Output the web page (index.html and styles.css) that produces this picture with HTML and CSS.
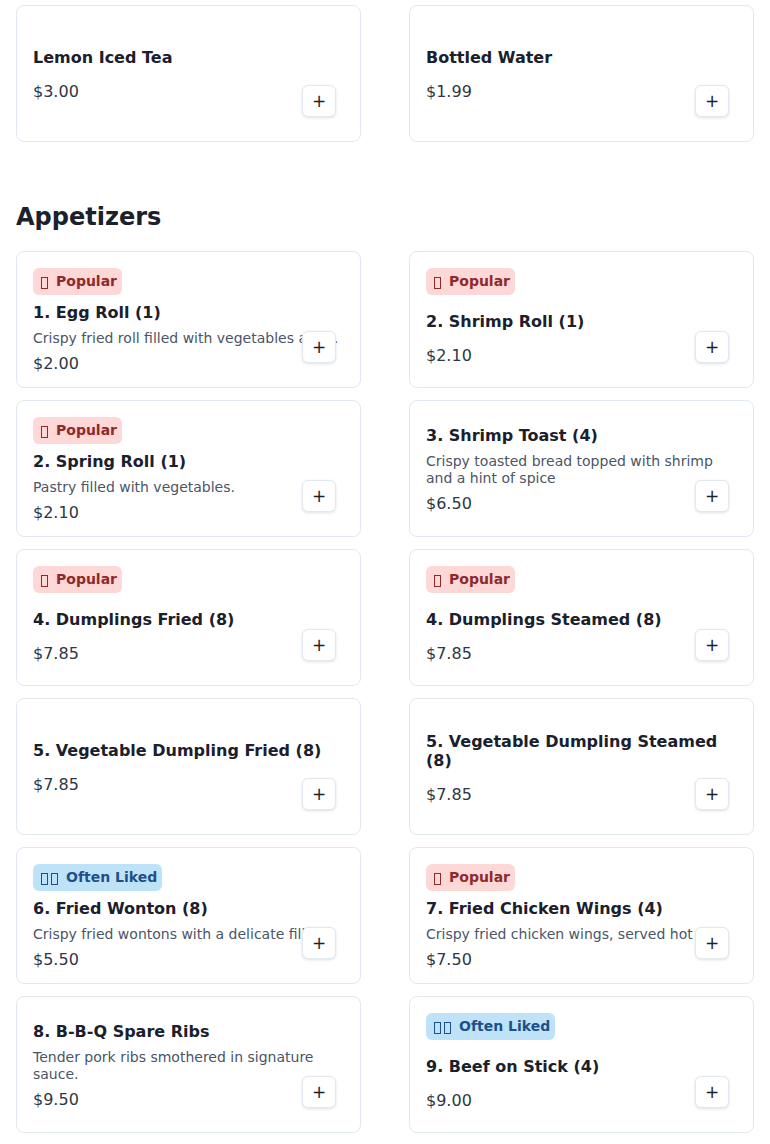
FILE: index.html
```html
<!DOCTYPE html>
<html lang="en">
<head>
<meta charset="utf-8">
<title>Menu</title>
<link rel="stylesheet" href="styles.css">
</head>
<body>
<main class="menu">
  <section class="section">
    <div class="grid">
      <article class="card">
        <div class="body">
          <h3 class="title">Lemon Iced Tea</h3>
          <p class="price">$3.00</p>
        </div>
        <button class="add" aria-label="Add">+</button>
      </article>
      <article class="card">
        <div class="body">
          <h3 class="title">Bottled Water</h3>
          <p class="price">$1.99</p>
        </div>
        <button class="add" aria-label="Add">+</button>
      </article>
    </div>
  </section>

  <section class="section">
    <h2 class="heading">Appetizers</h2>
    <div class="grid">
      <article class="card">
        <span class="badge badge-red"><span class="tofu"></span>Popular</span>
        <div class="body">
          <h3 class="title">1. Egg Roll (1)</h3>
          <p class="desc">Crispy fried roll filled with vegetables and...</p>
          <p class="price">$2.00</p>
        </div>
        <button class="add" aria-label="Add">+</button>
      </article>
      <article class="card">
        <span class="badge badge-red"><span class="tofu"></span>Popular</span>
        <div class="body">
          <h3 class="title">2. Shrimp Roll (1)</h3>
          <p class="price">$2.10</p>
        </div>
        <button class="add" aria-label="Add">+</button>
      </article>
      <article class="card">
        <span class="badge badge-red"><span class="tofu"></span>Popular</span>
        <div class="body">
          <h3 class="title">2. Spring Roll (1)</h3>
          <p class="desc">Pastry filled with vegetables.</p>
          <p class="price">$2.10</p>
        </div>
        <button class="add" aria-label="Add">+</button>
      </article>
      <article class="card">
        <div class="body">
          <h3 class="title">3. Shrimp Toast (4)</h3>
          <p class="desc">Crispy toasted bread topped with shrimp and a hint of spice</p>
          <p class="price">$6.50</p>
        </div>
        <button class="add" aria-label="Add">+</button>
      </article>
      <article class="card">
        <span class="badge badge-red"><span class="tofu"></span>Popular</span>
        <div class="body">
          <h3 class="title">4. Dumplings Fried (8)</h3>
          <p class="price">$7.85</p>
        </div>
        <button class="add" aria-label="Add">+</button>
      </article>
      <article class="card">
        <span class="badge badge-red"><span class="tofu"></span>Popular</span>
        <div class="body">
          <h3 class="title">4. Dumplings Steamed (8)</h3>
          <p class="price">$7.85</p>
        </div>
        <button class="add" aria-label="Add">+</button>
      </article>
      <article class="card">
        <div class="body">
          <h3 class="title">5. Vegetable Dumpling Fried (8)</h3>
          <p class="price">$7.85</p>
        </div>
        <button class="add" aria-label="Add">+</button>
      </article>
      <article class="card">
        <div class="body">
          <h3 class="title">5. Vegetable Dumpling Steamed (8)</h3>
          <p class="price">$7.85</p>
        </div>
        <button class="add" aria-label="Add">+</button>
      </article>
      <article class="card">
        <span class="badge badge-blue"><span class="tofu tofu-pair"></span><span class="tofu"></span>Often Liked</span>
        <div class="body">
          <h3 class="title">6. Fried Wonton (8)</h3>
          <p class="desc">Crispy fried wontons with a delicate filling.</p>
          <p class="price">$5.50</p>
        </div>
        <button class="add" aria-label="Add">+</button>
      </article>
      <article class="card">
        <span class="badge badge-red"><span class="tofu"></span>Popular</span>
        <div class="body">
          <h3 class="title">7. Fried Chicken Wings (4)</h3>
          <p class="desc">Crispy fried chicken wings, served hot</p>
          <p class="price">$7.50</p>
        </div>
        <button class="add" aria-label="Add">+</button>
      </article>
      <article class="card">
        <div class="body">
          <h3 class="title">8. B-B-Q Spare Ribs</h3>
          <p class="desc">Tender pork ribs smothered in signature sauce.</p>
          <p class="price">$9.50</p>
        </div>
        <button class="add" aria-label="Add">+</button>
      </article>
      <article class="card">
        <span class="badge badge-blue"><span class="tofu tofu-pair"></span><span class="tofu"></span>Often Liked</span>
        <div class="body">
          <h3 class="title">9. Beef on Stick (4)</h3>
          <p class="price">$9.00</p>
        </div>
        <button class="add" aria-label="Add">+</button>
      </article>
    </div>
  </section>
</main>
</body>
</html>
```

FILE: styles.css
```css
* {
  box-sizing: border-box;
}

html, body {
  margin: 0;
  padding: 0;
  background: #ffffff;
}

body {
  font-family: "DejaVu Sans", "Noto Sans", sans-serif;
  color: #1a202c;
}

.menu {
  padding: 5px 16px 0;
}

.section + .section {
  margin-top: 61px;
}

.heading {
  margin: 0 0 19px;
  font-size: 24px;
  line-height: 29px;
  font-weight: 700;
  color: #1a202c;
}

.grid {
  display: grid;
  grid-template-columns: 1fr 1fr;
  gap: 12px 48px;
}

.card {
  position: relative;
  display: flex;
  flex-direction: column;
  align-items: flex-start;
  min-height: 137px;
  padding: 16px 16px 14px;
  border: 1px solid #e2e8f0;
  border-radius: 8px;
  background: #ffffff;
}

.badge {
  display: inline-block;
  margin-bottom: 8px;
  padding: 4px 5px 4px 8px;
  border-radius: 6px;
  font-size: 14px;
  line-height: 19px;
  font-weight: 700;
}

.tofu {
  display: inline-block;
  width: 7px;
  height: 12px;
  margin-right: 8px;
  border: 1px solid currentColor;
  vertical-align: -3px;
}

.tofu-pair {
  margin-right: 3px;
}

.badge-red {
  background: #fed7d7;
  color: #8f2a2a;
}

.badge-blue {
  background: #bee3f8;
  color: #1f4f8a;
}

.body {
  flex: 1;
  display: flex;
  flex-direction: column;
  justify-content: center;
  width: 100%;
}

.title {
  margin: 0 0 8px;
  font-size: 16px;
  line-height: 19px;
  font-weight: 700;
  color: #1a202c;
}

.desc {
  margin: 0;
  font-size: 14px;
  line-height: 17px;
  color: #4a5568;
}

.price {
  margin: 7px 0 0;
  font-size: 16px;
  line-height: 19px;
  color: #2d3748;
}

.add {
  position: absolute;
  right: 24px;
  bottom: 24px;
  width: 34px;
  height: 32px;
  padding: 0;
  border: 1px solid #e2e8f0;
  border-radius: 6px;
  background: #ffffff;
  box-shadow: 0 1px 3px rgba(0, 0, 0, 0.12);
  font-family: "DejaVu Sans", sans-serif;
  font-size: 17px;
  line-height: 1;
  color: #1a202c;
  cursor: pointer;
}
```
